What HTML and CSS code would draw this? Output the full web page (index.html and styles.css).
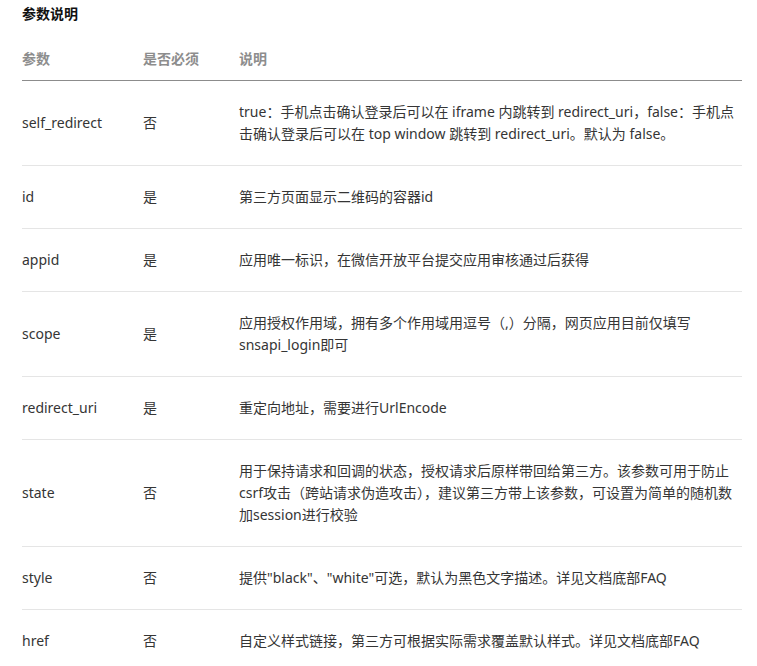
FILE: index.html
```html
<!DOCTYPE html>
<html lang="zh-CN">
<head>
<meta charset="utf-8">
<title>参数说明</title>
<link rel="stylesheet" href="styles.css">
</head>
<body>
<div class="doc">
  <h4 class="title">参数说明</h4>
  <table class="params">
    <colgroup>
      <col class="c-name">
      <col class="c-req">
      <col class="c-desc">
    </colgroup>
    <thead>
      <tr><th>参数</th><th>是否必须</th><th>说明</th></tr>
    </thead>
    <tbody>
      <tr><td>self_redirect</td><td>否</td><td>true：手机点击确认登录后可以在 iframe 内跳转到 redirect_uri，false：手机点击确认登录后可以在 top window 跳转到 redirect_uri。默认为 false。</td></tr>
      <tr><td>id</td><td>是</td><td>第三方页面显示二维码的容器id</td></tr>
      <tr><td>appid</td><td>是</td><td>应用唯一标识，在微信开放平台提交应用审核通过后获得</td></tr>
      <tr><td>scope</td><td>是</td><td>应用授权作用域，拥有多个作用域用逗号（,）分隔，网页应用目前仅填写snsapi_login即可</td></tr>
      <tr><td>redirect_uri</td><td>是</td><td>重定向地址，需要进行UrlEncode</td></tr>
      <tr><td>state</td><td>否</td><td>用于保持请求和回调的状态，授权请求后原样带回给第三方。该参数可用于防止csrf攻击（跨站请求伪造攻击），建议第三方带上该参数，可设置为简单的随机数加session进行校验</td></tr>
      <tr><td>style</td><td>否</td><td>提供"black"、"white"可选，默认为黑色文字描述。详见文档底部FAQ</td></tr>
      <tr><td>href</td><td>否</td><td>自定义样式链接，第三方可根据实际需求覆盖默认样式。详见文档底部FAQ</td></tr>
    </tbody>
  </table>
</div>
</body>
</html>
```
FILE: styles.css
```css
html, body {
  margin: 0;
  padding: 0;
  background: #ffffff;
}
body {
  font-family: "Noto Sans", "Noto Sans CJK SC", sans-serif;
  color: #353535;
  font-size: 14px;
}
.doc {
  padding: 0 15px 0 22px;
  width: 720px;
}
.title {
  margin: 4px 0 0;
  font-size: 14px;
  line-height: 20px;
  font-weight: bold;
  color: #111;
}
.params {
  width: 720px;
  border-collapse: collapse;
  table-layout: fixed;
}
.c-name { width: 121px; }
.c-req { width: 96px; }
.params th {
  text-align: left;
  font-weight: bold;
  color: #8d8d8d;
  font-size: 14px;
  line-height: 22px;
  padding: 24px 0 10px;
  border-bottom: 1px solid #8c8c8c;
}
.params td {
  padding: 20px 0;
  line-height: 22px;
  vertical-align: middle;
  border-bottom: 1px solid #e5e5e5;
}
```
